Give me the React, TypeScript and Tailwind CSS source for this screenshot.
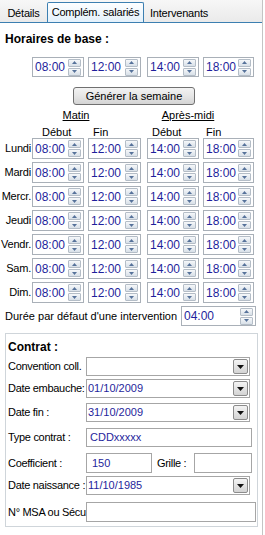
import React from "react";

const BLUE = "text-[#1f1f9c]";

function SpinBtns() {
  return (
    <div className="ml-auto mr-[2px] flex h-[17px] w-[13px] flex-col justify-between">
      <div className="flex h-[8px] items-center justify-center rounded-[1px] border border-[#b4bdc7] bg-gradient-to-b from-[#f6f8fa] to-[#d8e0e8]">
        <svg width="5" height="3" viewBox="0 0 5 3">
          <path d="M0 3 L2.5 0 L5 3 Z" fill="#56729a" />
        </svg>
      </div>
      <div className="flex h-[8px] items-center justify-center rounded-[1px] border border-[#b4bdc7] bg-gradient-to-b from-[#f6f8fa] to-[#d8e0e8]">
        <svg width="5" height="3" viewBox="0 0 5 3">
          <path d="M0 0 L2.5 3 L5 0 Z" fill="#56729a" />
        </svg>
      </div>
    </div>
  );
}

function Spin({ value, w, h = "h-[21px]" }: { value: string; w: string; h?: string }) {
  return (
    <div className={`flex ${w} ${h} items-center border border-[#a9b0b8] bg-white`}>
      <span className={`pl-[2px] text-[12px] leading-none ${BLUE}`}>{value}</span>
      <SpinBtns />
    </div>
  );
}

function TimeRow({ label, h = "h-[21px]" }: { label: string; h?: string }) {
  return (
    <div className={`flex ${h} items-center`}>
      <div className="w-[32px] whitespace-nowrap pr-[1px] text-right text-[11px] leading-none tracking-[-0.2px]">{label}</div>
      <Spin value="08:00" w="w-[52px]" h={h} />
      <div className="ml-[4px]">
        <Spin value="12:00" w="w-[53px]" h={h} />
      </div>
      <div className="ml-[6px]">
        <Spin value="14:00" w="w-[52px]" h={h} />
      </div>
      <div className="ml-[4px]">
        <Spin value="18:00" w="w-[51px]" h={h} />
      </div>
    </div>
  );
}

function ComboArrow() {
  return (
    <div className="ml-auto mr-[1px] flex h-[15px] w-[15px] items-center justify-center rounded-[2px] border border-[#8c8c8c] bg-gradient-to-b from-[#f4f4f4] to-[#d3d3d3]">
      <svg width="7" height="4" viewBox="0 0 7 4">
        <path d="M0 0 L7 0 L3.5 4 Z" fill="#111" />
      </svg>
    </div>
  );
}

function Combo({ value, w }: { value?: string; w: string }) {
  return (
    <div className={`relative flex ${w} h-[19px] items-center border border-[#a6a6a6] bg-white`}>
      <span className={`pl-[1px] text-[11px] leading-none ${BLUE}`}>{value}</span>
      <ComboArrow />
    </div>
  );
}

function Field({ value, w, h = "h-[19px]", pl = "pl-[3px]" }: { value?: string; w: string; h?: string; pl?: string }) {
  return (
    <div className={`relative flex ${w} ${h} items-center border border-[#a6a6a6] bg-white`}>
      <span className={`${pl} text-[11px] leading-none ${BLUE}`}>{value}</span>
    </div>
  );
}

function Label({ children, w = "w-[78px]" }: { children: React.ReactNode; w?: string }) {
  return <div className={`${w} shrink-0 whitespace-nowrap leading-none tracking-[-0.3px]`}>{children}</div>;
}

export default function App() {
  const days = ["Lundi", "Mardi", "Mercr.", "Jeudi", "Vendr.", "Sam.", "Dim."];
  return (
    <div className="h-[535px] w-[265px] overflow-hidden bg-white font-['Liberation_Sans',Arial,sans-serif] text-[11px] text-black">
      <div className="flex h-[535px] w-[263px] flex-col border-r border-[#c4c4c4]">
        {/* Tabs */}
        <div className="flex h-[23px] items-end border-b border-[#3c7fb1] bg-gradient-to-b from-[#f7f7f7] to-[#eaeaea]">
          <div className="flex h-[18px] w-[47px] items-center justify-center leading-none tracking-[-0.2px]">Détails</div>
          <div className="flex h-[20px] w-[97px] items-center justify-center rounded-t-[2px] border border-b-0 border-[#3c7fb1] bg-gradient-to-b from-[#fdfeff] to-[#e4f1fb] leading-none tracking-[-0.2px]">
            Complém. salariés
          </div>
          <div className="flex h-[18px] w-[70px] items-center justify-center leading-none tracking-[-0.2px]">Intervenants</div>
        </div>

        <div className="mt-[10px] h-[13px] pl-[5px] text-[12px] font-bold leading-[13px]">Horaires de base :</div>

        <div className="mt-[11px]">
          <TimeRow label="" h="h-[20px]" />
        </div>

        <div className="mt-[10px] flex pl-[73px]">
          <div className="flex h-[18px] w-[122px] items-center justify-center rounded-[3px] border border-[#707070] bg-gradient-to-b from-[#f3f3f3] via-[#e6e6e6] to-[#d4d4d4] leading-none">
            Générer la semaine
          </div>
        </div>

        <div className="mt-[4px] flex h-[13px] items-center leading-none">
          <div className="ml-[32px] w-[88px] text-center underline">Matin</div>
          <div className="w-[136px] text-center underline">Après-midi</div>
        </div>

        <div className="mt-[5px] flex h-[10px] items-center leading-none">
          <div className="ml-[32px] w-[52px] pl-[10px]">Début</div>
          <div className="ml-[4px] w-[53px] pl-[5px]">Fin</div>
          <div className="ml-[6px] w-[52px] pl-[5px]">Début</div>
          <div className="ml-[4px] w-[51px] pl-[3px]">Fin</div>
        </div>

        <div className="mt-[1px] flex flex-col gap-[3px]">
          {days.map((d) => (
            <TimeRow key={d} label={d} />
          ))}
        </div>

        <div className="mt-[3px] flex h-[20px] items-center">
          <div className="w-[181px] pl-[5px] leading-none">Durée par défaut d'une intervention</div>
          <Spin value="04:00" w="w-[75px]" h="h-[20px]" />
        </div>

        {/* Contrat group */}
        <div className="ml-[5px] mt-[7px] flex h-[194px] w-[253px] flex-col border border-[#cfd5da] pl-[2px]">
          <div className="mt-[7px] h-[13px] text-[12px] font-bold leading-[13px]">Contrat :</div>

          <div className="mt-[3px] flex items-center">
            <Label>Convention coll.</Label>
            <Combo w="w-[164px]" />
          </div>
          <div className="mt-[3px] flex items-center">
            <Label>Date embauche:</Label>
            <Combo value="01/10/2009" w="w-[164px]" />
          </div>
          <div className="mt-[5px] flex items-center">
            <Label>Date fin :</Label>
            <Combo value="31/10/2009" w="w-[164px]" />
          </div>
          <div className="mt-[6px] flex items-center">
            <Label>Type contrat :</Label>
            <Field value="CDDxxxxx" w="w-[166px]" />
          </div>
          <div className="mt-[6px] flex items-center">
            <Label>Coefficient :</Label>
            <Field value="150" w="w-[66px]" h="h-[20px]" pl="pl-[5px]" />
            <Label w="w-[42px] pl-[5px]">Grille :</Label>
            <Field w="w-[58px]" h="h-[20px]" />
          </div>
          <div className="mt-[3px] flex items-center">
            <Label>Date naissance :</Label>
            <Combo value="11/10/1985" w="w-[164px]" />
          </div>
          <div className="mt-[7px] flex items-center">
            <Label>N° MSA ou Sécu</Label>
            <Field w="w-[170px]" h="h-[20px]" />
          </div>
        </div>
      </div>
    </div>
  );
}
